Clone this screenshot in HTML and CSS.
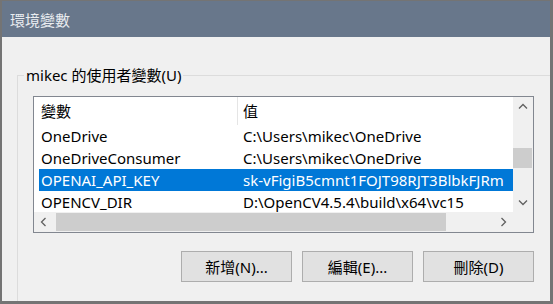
FILE: index.html
```html
<!DOCTYPE html>
<html lang="zh-Hant">
<head>
  <meta charset="UTF-8" />
  <title>環境變數</title>
  <link rel="stylesheet" href="styles.css">
</head>
<body>
  <div class="window">
    <div class="titlebar">環境變數</div>

    <div class="client">
      <fieldset class="group">
        <legend>mikec 的使用者變數(U)</legend>

        <div class="listview">
          <div class="list-body">
            <div class="list-header">
              <span class="col-name">變數</span>
              <span class="col-value">值</span>
            </div>
            <div class="list-row">
              <span class="col-name">OneDrive</span>
              <span class="col-value">C:\Users\mikec\OneDrive</span>
            </div>
            <div class="list-row">
              <span class="col-name">OneDriveConsumer</span>
              <span class="col-value">C:\Users\mikec\OneDrive</span>
            </div>
            <div class="list-row selected">
              <span class="col-name">OPENAI_API_KEY</span>
              <span class="col-value">sk-vFigiB5cmnt1FOJT98RJT3BlbkFJRm</span>
            </div>
            <div class="list-row">
              <span class="col-name">OPENCV_DIR</span>
              <span class="col-value">D:\OpenCV4.5.4\build\x64\vc15</span>
            </div>
          </div>

          <div class="vscroll">
            <div class="arrow">
              <svg width="20" height="20" viewBox="0 0 20 20"><polyline points="6,11.5 10,7.5 14,11.5" /></svg>
            </div>
            <div class="track vtrack"><div class="thumb"></div></div>
            <div class="arrow">
              <svg width="20" height="20" viewBox="0 0 20 20"><polyline points="6,8.5 10,12.5 14,8.5" /></svg>
            </div>
          </div>

          <div class="hscroll">
            <div class="arrow">
              <svg width="20" height="20" viewBox="0 0 20 20"><polyline points="11.5,6 7.5,10 11.5,14" /></svg>
            </div>
            <div class="track htrack"><div class="thumb"></div></div>
            <div class="arrow">
              <svg width="20" height="20" viewBox="0 0 20 20"><polyline points="8.5,6 12.5,10 8.5,14" /></svg>
            </div>
          </div>

          <div class="corner"></div>
        </div>

        <div class="buttons">
          <button class="btn">新增(N)...</button>
          <button class="btn">編輯(E)...</button>
          <button class="btn">刪除(D)</button>
        </div>
      </fieldset>
    </div>
  </div>
</body>
</html>
```

FILE: styles.css
```css
body {
  margin: 0;
  padding: 0;
  background-color: #f0f0f0;
  font-family: "Noto Sans", "Noto Sans CJK TC", sans-serif;
  font-size: 15px;
  color: #000;
}

.window {
  width: 553px;
  height: 304px;
  box-sizing: border-box;
  border-style: solid;
  border-color: #747474;
  border-width: 1px 3px 3px 2px;
  display: flex;
  flex-direction: column;
  overflow: hidden;
}

.titlebar {
  height: 36px;
  box-sizing: border-box;
  flex-shrink: 0;
  background-color: #68778b;
  color: #e9ecf0;
  font-family: "Noto Sans CJK TC", sans-serif;
  font-size: 15px;
  line-height: 34px;
  padding: 2px 0 0 8px;
}

.client {
  flex: 1;
  background-color: #f0f0f0;
  overflow: hidden;
}

.group {
  width: 560px;
  height: 260px;
  box-sizing: border-box;
  margin: 28px 0 0 15px;
  padding: 0;
  border: 1px solid #dcdcdc;
}

.group legend {
  margin-left: 6px;
  padding: 0 2px;
  line-height: 20px;
}

.listview {
  width: 501px;
  height: 137px;
  box-sizing: border-box;
  margin: 11px 0 0 15px;
  border: 1px solid #828790;
  background-color: #fff;
  display: grid;
  grid-template-columns: 1fr 20px;
  grid-template-rows: 1fr 20px;
}

.list-body {
  overflow: hidden;
  white-space: nowrap;
}

.list-header {
  display: flex;
  height: 28px;
  line-height: 28px;
}

.list-header .col-name {
  width: 203px;
  flex-shrink: 0;
  box-sizing: border-box;
  padding-left: 7px;
}

.list-header .col-value {
  border-left: 1px solid #e5e5e5;
  padding-left: 5px;
}

.list-row {
  display: flex;
  height: 22px;
  line-height: 22px;
  margin-left: 5px;
}

.list-row .col-name {
  width: 198px;
  flex-shrink: 0;
  box-sizing: border-box;
  padding-left: 2px;
}

.list-row .col-value {
  padding-left: 6px;
}

.list-row.selected {
  background-color: #0078d7;
  color: #fff;
}

.vscroll,
.hscroll {
  background-color: #f0f0f0;
  display: flex;
}

.vscroll {
  flex-direction: column;
}

.arrow {
  width: 20px;
  height: 20px;
  flex-shrink: 0;
}

.arrow polyline {
  fill: none;
  stroke: #606060;
  stroke-width: 1.3;
}

.track {
  flex: 1;
}

.thumb {
  background-color: #cdcdcd;
}

.vtrack .thumb {
  margin: 31px 1px 0 0;
  height: 20px;
}

.htrack .thumb {
  margin: 1px 0 0 2px;
  width: 390px;
  height: 18px;
}

.corner {
  background-color: #f0f0f0;
}

.buttons {
  width: 501px;
  margin: 18px 0 0 15px;
  display: flex;
  justify-content: flex-end;
  gap: 10px;
}

.btn {
  width: 111px;
  height: 31px;
  box-sizing: border-box;
  border: 1px solid #adadad;
  background-color: #e1e1e1;
  font-family: "Noto Sans", "Noto Sans CJK TC", sans-serif;
  font-size: 15px;
  color: #000;
  padding: 0;
}
```
